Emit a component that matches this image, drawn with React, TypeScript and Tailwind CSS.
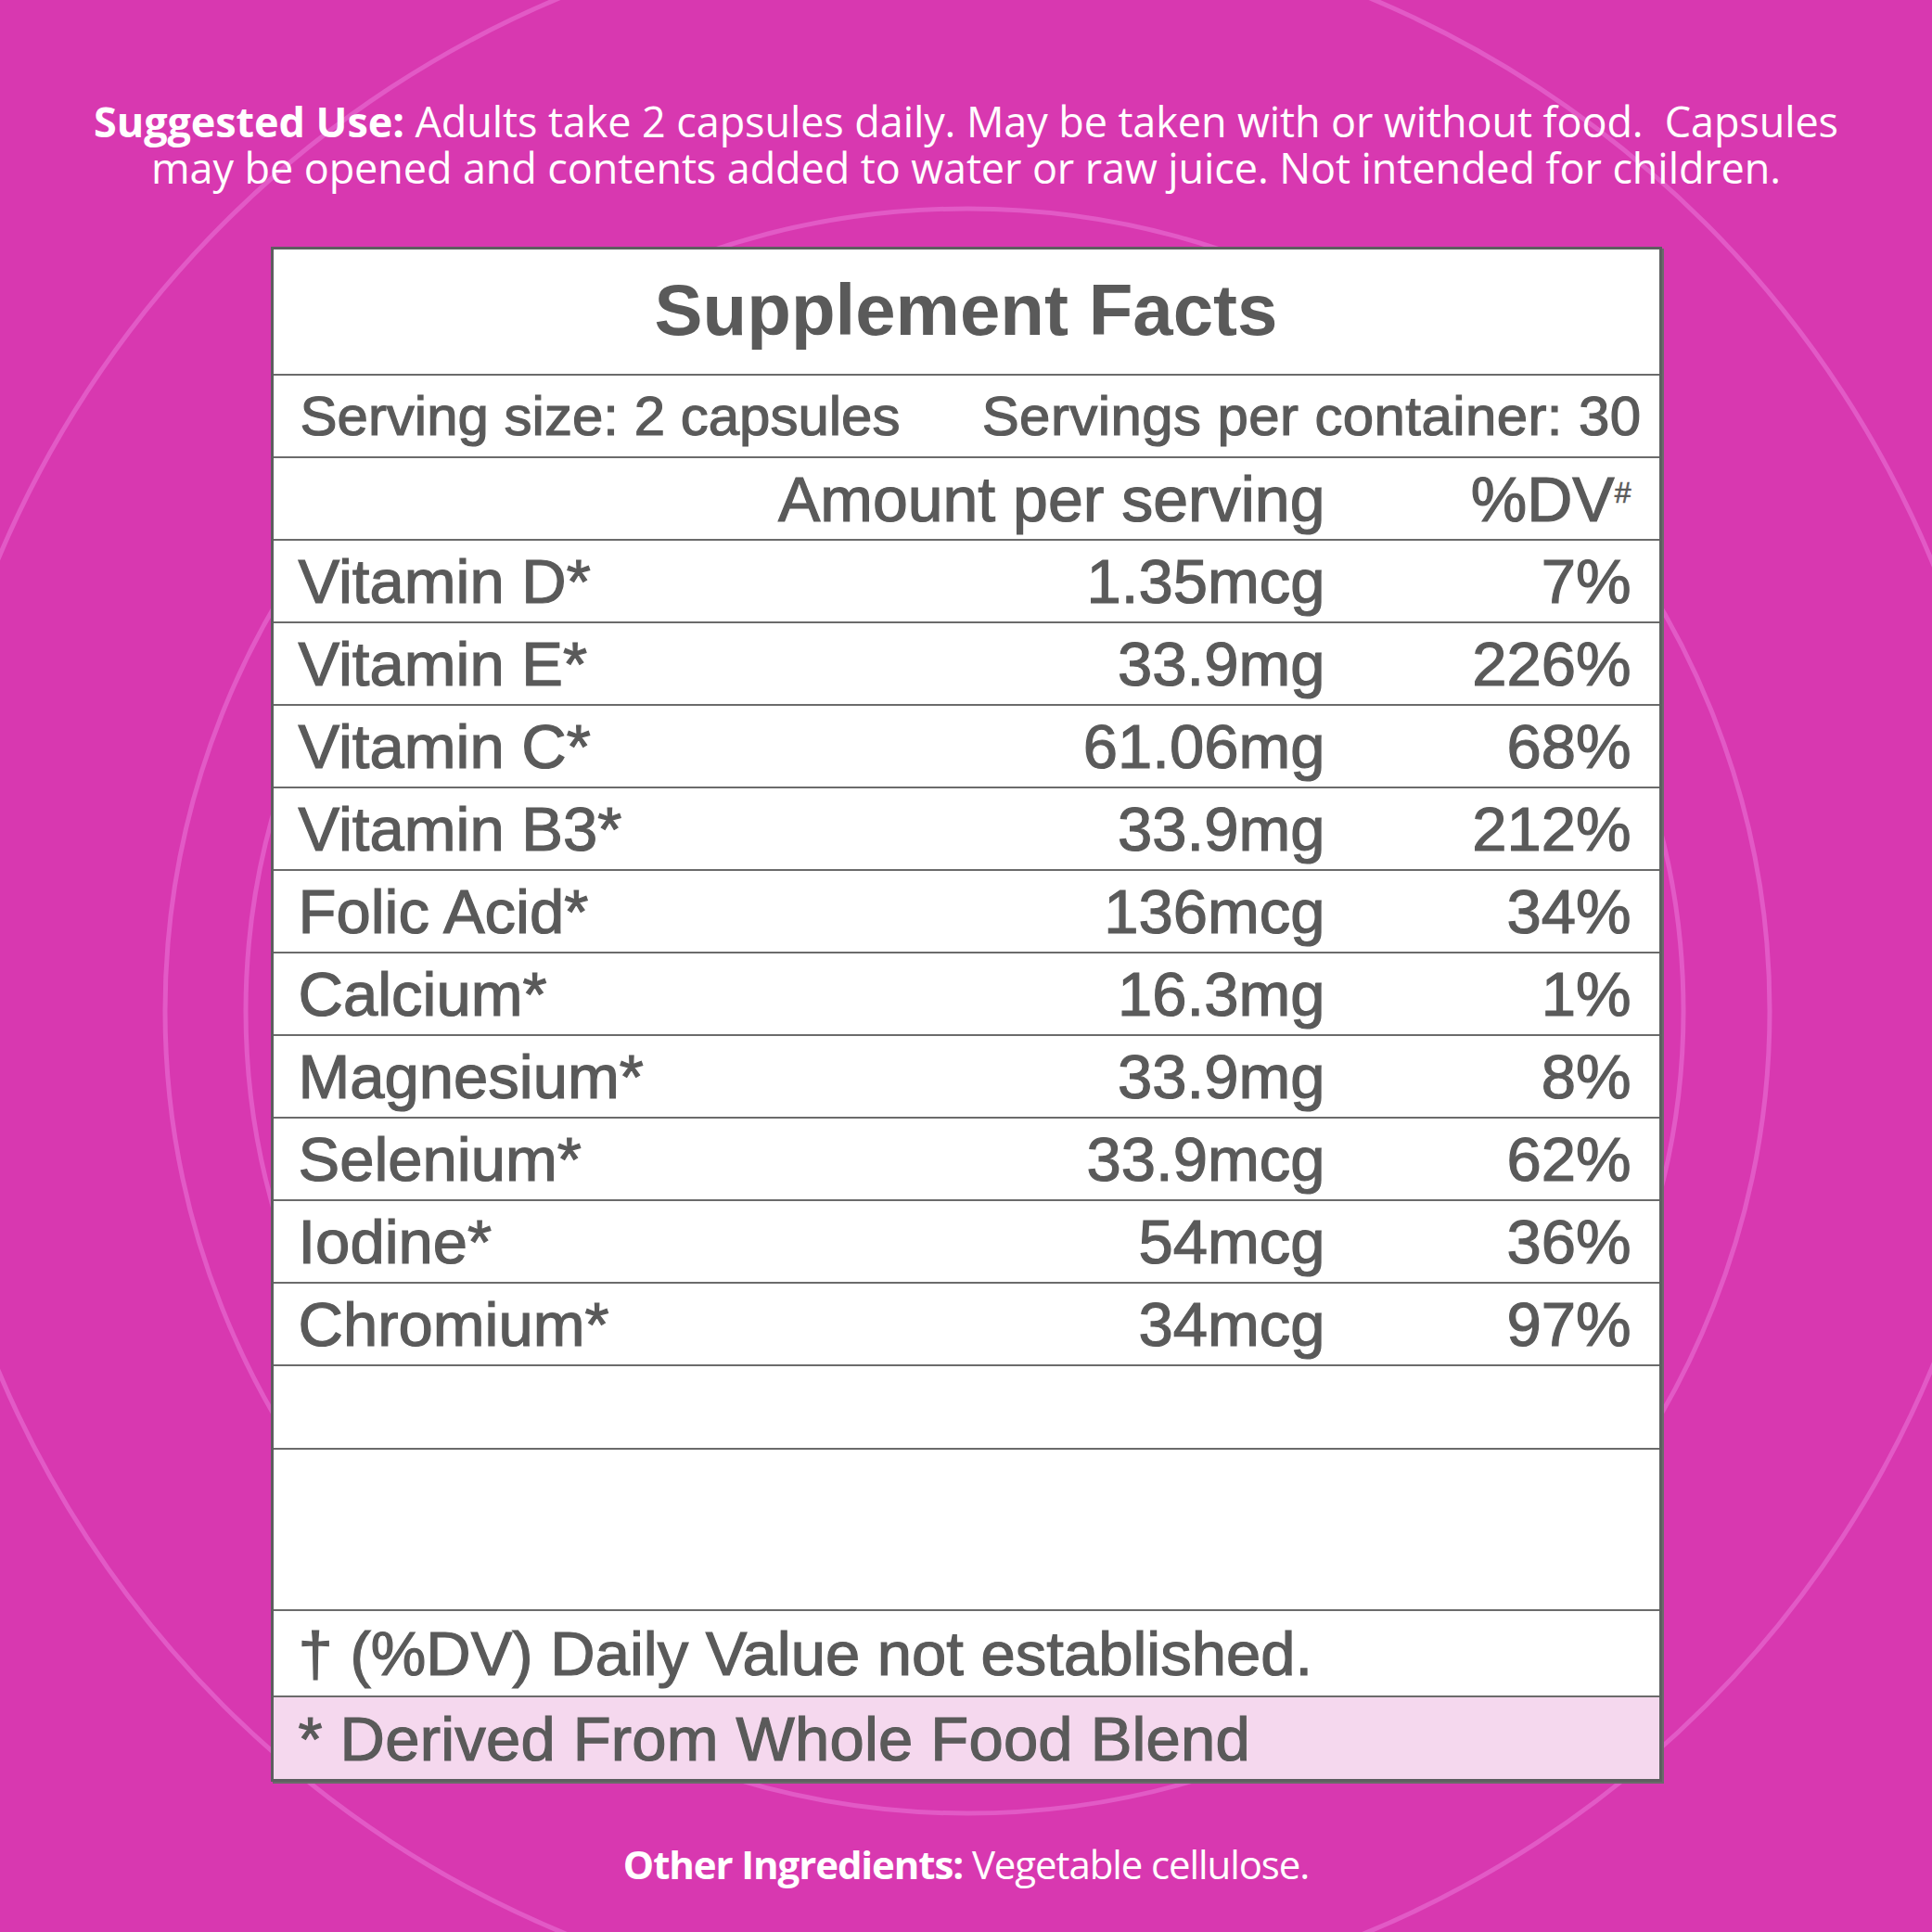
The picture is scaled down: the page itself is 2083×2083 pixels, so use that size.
const rows = [
  { name: "Vitamin D*", amount: "1.35mcg", dv: "7%" },
  { name: "Vitamin E*", amount: "33.9mg", dv: "226%" },
  { name: "Vitamin C*", amount: "61.06mg", dv: "68%" },
  { name: "Vitamin B3*", amount: "33.9mg", dv: "212%" },
  { name: "Folic Acid*", amount: "136mcg", dv: "34%" },
  { name: "Calcium*", amount: "16.3mg", dv: "1%" },
  { name: "Magnesium*", amount: "33.9mg", dv: "8%" },
  { name: "Selenium*", amount: "33.9mcg", dv: "62%" },
  { name: "Iodine*", amount: "54mcg", dv: "36%" },
  { name: "Chromium*", amount: "34mcg", dv: "97%" },
];

const label =
  "font-['Liberation_Sans',Arial,sans-serif] text-[#5a5a5a] [-webkit-text-stroke:1.2px_#5a5a5a]";

const App = () => {
  return (
    <div className="relative w-[2083px] h-[2083px] overflow-hidden bg-[#d838b0]">
      {/* background rings */}
      <svg className="absolute inset-0" width="2083" height="2083" viewBox="0 0 2083 2083">
        <g fill="none" stroke="#e25ac6" strokeWidth="5">
          <circle cx="1040" cy="1040" r="1130" />
          <circle cx="1043" cy="1090" r="865" />
          <circle cx="1040" cy="1090" r="775" />
        </g>
      </svg>

      <div className="relative flex flex-col items-center pt-[106px] font-['Open_Sans',sans-serif] text-white">
        <div className="text-center text-[45px] leading-[50px] tracking-[-0.1px]">
          <div>
            <span className="font-bold">Suggested Use:</span> Adults take 2 capsules daily. May be taken with or without food.&nbsp; Capsules
          </div>
          <div>may be opened and contents added to water or raw juice. Not intended for children.</div>
        </div>

        <div className="mt-[60px] w-[1500px] border-[3px] border-[#5e5e60] bg-white shadow-[2px_2px_0_#6a6a6a]">
          <div className="flex h-[136px] items-center justify-center border-b-2 border-[#6b6b6b]">
            <h1 className="-mt-[4px] font-['Liberation_Sans',Arial,sans-serif] text-[78px] font-bold leading-none text-[#5a5a5a]">
              Supplement Facts
            </h1>
          </div>

          <div className={`flex h-[89px] items-center justify-between border-b-2 border-[#6b6b6b] pl-[29px] pr-[19px] text-[60px] leading-none ${label}`}>
            <span>Serving size: 2 capsules</span>
            <span className="tracking-[0.4px]">Servings per container: 30</span>
          </div>

          <div className={`flex h-[89px] items-center border-b-2 border-[#6b6b6b] pl-[27px] pr-[30px] text-[68px] leading-none ${label}`}>
            <span className="flex-1" />
            <span>Amount per serving</span>
            <span className="w-[330px] text-right">
              %DV<span className="relative -top-[20px] inline-block text-[32px] [-webkit-text-stroke:0.6px_#5a5a5a]">#</span>
            </span>
          </div>

          {rows.map((row) => (
            <div
              key={row.name}
              className={`flex h-[89px] items-center border-b-2 border-[#6b6b6b] pl-[27px] pr-[30px] text-[67px] leading-none ${label}`}
            >
              <span className="flex-1">{row.name}</span>
              <span>{row.amount}</span>
              <span className="w-[330px] text-right">{row.dv}</span>
            </div>
          ))}

          <div className="h-[90px] border-b-2 border-[#6b6b6b]" />
          <div className="h-[174px] border-b-2 border-[#6b6b6b]" />

          <div className={`flex h-[93px] items-center border-b-2 border-[#6b6b6b] pl-[27px] text-[67px] leading-none ${label}`}>
            † (%DV) Daily Value not established.
          </div>
          <div className={`flex h-[88px] items-center bg-[#f5d8ee] pl-[27px] text-[67px] leading-none tracking-[0.2px] ${label}`}>
            * Derived From Whole Food Blend
          </div>
        </div>

        <div className="mt-[64px] text-center text-[42px] leading-[50px] tracking-[-1.1px]">
          <span className="font-bold">Other Ingredients:</span> Vegetable cellulose.
        </div>
      </div>
    </div>
  );
};

export default App;
